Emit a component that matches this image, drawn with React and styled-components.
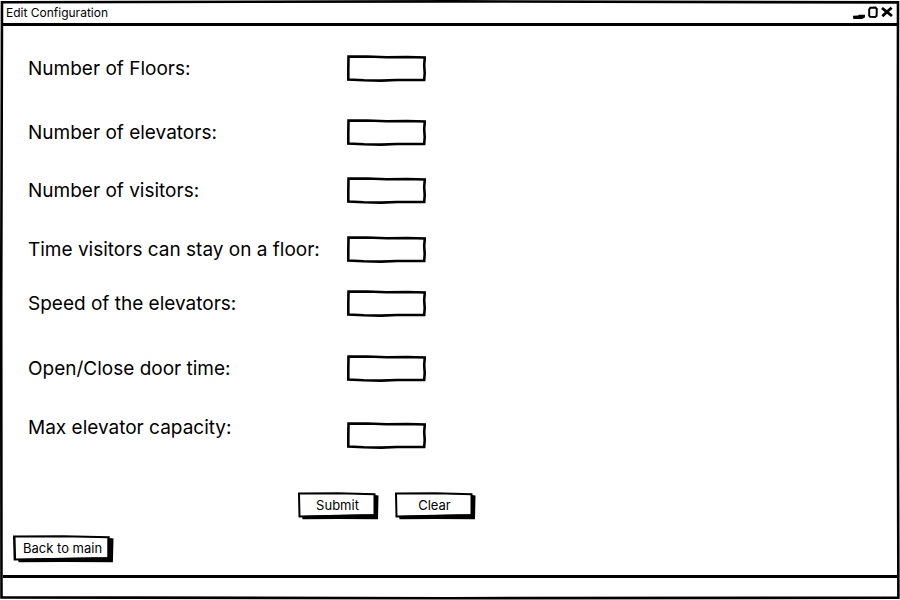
import React from "react";
import styled, { createGlobalStyle } from "styled-components";

const GlobalStyle = createGlobalStyle`
  *, *::before, *::after { box-sizing: border-box; }
  body { margin: 0; background: #fff; color: #000; font-family: Inter, "Open Sans", sans-serif; }
`;

const Window = styled.div`
  position: relative;
  display: flex;
  flex-direction: column;
  min-height: 100vh;
  padding: 3px;
`;

const Sketch = styled.svg`
  position: absolute;
  inset: 0;
  width: 100%;
  height: 100%;
  fill: none;
  stroke: #000;
  pointer-events: none;
`;

const TitleBar = styled.header`
  display: flex;
  align-items: center;
  justify-content: space-between;
  height: 23px;
  padding: 0 4px 1px 3px;
  border-bottom: 3px solid #000;
`;

const Title = styled.h1`
  margin: 0;
  font-size: 12px;
  line-height: 16px;
  font-weight: 400;
`;

const WindowControls = styled.div`
  display: flex;
  align-items: center;
  gap: 3px;
`;

const ControlButton = styled.button`
  display: flex;
  padding: 0;
  border: 0;
  background: none;
`;

const Content = styled.main`
  flex: 1;
  padding: 29px 10px 10px;
`;

const Form = styled.form`
  display: flex;
  flex-direction: column;
  padding-left: 15px;
`;

const Row = styled.div`
  display: grid;
  grid-template-columns: 319px 79px;
  align-items: end;
  height: ${(p) => (p.$staggered ? "35px" : "27px")};
  margin-bottom: ${(p) => p.$after}px;
`;

const Label = styled.label`
  align-self: start;
  font-size: 19px;
  line-height: 27px;
  white-space: nowrap;
`;

const InputFrame = styled.div`
  position: relative;
  height: 27px;
`;

const Input = styled.input`
  display: block;
  width: 100%;
  height: 100%;
  padding: 4px 8px;
  border: 0;
  outline: 0;
  background: transparent;
  font: inherit;
  font-size: 16px;
`;

const Actions = styled.div`
  display: flex;
  gap: 16px;
  padding-left: 270px;
`;

const Button = styled.button`
  position: relative;
  display: block;
  height: 28px;
  min-width: 81px;
  padding: 0 12px 3px 10px;
  border: 0;
  background: none;
  color: #000;
  font: inherit;
  font-size: 13px;
  line-height: 16px;
`;

const Footer = styled.footer`
  height: 22px;
  border-top: 3px solid #000;
`;

const BackBar = styled.nav`
  margin-top: 15px;
`;

const fields = [
  { id: "floors", label: "Number of Floors:", after: 37 },
  { id: "elevators", label: "Number of elevators:", after: 31 },
  { id: "visitors", label: "Number of visitors:", after: 32 },
  { id: "stay", label: "Time visitors can stay on a floor:", after: 27 },
  { id: "speed", label: "Speed of the elevators:", after: 38 },
  { id: "door", label: "Open/Close door time:", after: 32 },
  { id: "capacity", label: "Max elevator capacity:", after: 43, staggered: true },
];

function SketchInput({ id }) {
  return (
    <InputFrame>
      <Sketch viewBox="0 0 79 27" preserveAspectRatio="none" aria-hidden="true">
        <path strokeWidth="2.6" d="M1.5 1.6 L20 1.5 L40 2.2 L60 2 L77.8 2.4 L77.2 10 L77.7 18 L77.2 25 L50 25 L34 25.6 L17 25.3 L1.3 24.6 L1.3 14 Z" />
      </Sketch>
      <Input id={id} name={id} type="text" />
    </InputFrame>
  );
}

function SketchButton({ children, ...rest }) {
  return (
    <Button {...rest}>
      <Sketch viewBox="0 0 81 28" preserveAspectRatio="none" aria-hidden="true">
        <path strokeWidth="2" d="M1 1.5 L40 1.2 L76.5 2.2 L76.5 23 L52 23.4 L30 24 L1.5 24.5 Z" />
        <path stroke="none" fill="#000" d="M77 3 L80.5 3.5 L80 27.2 L40 27 L4.5 27.2 L4 24 L40 23 L76 22.5 Z" />
      </Sketch>
      {children}
    </Button>
  );
}

export default function App() {
  return (
    <>
      <GlobalStyle />
      <Window>
        <Sketch viewBox="0 0 900 600" preserveAspectRatio="none" aria-hidden="true">
          <path strokeWidth="2.6" d="M2 2.2 L450 1.4 L898 2.4 L897.6 300 L898.4 597.8 L450 598.2 L1.5 597.4 L1.2 300 Z" />
        </Sketch>
        <TitleBar>
          <Title>Edit Configuration</Title>
          <WindowControls>
            <ControlButton type="button" aria-label="Minimize">
              <svg width="12" height="14" viewBox="0 0 12 14" aria-hidden="true">
                <path d="M0 9.8 L5 9.6 L6 8.8 L12 8.8 L11.9 11.6 L9 13 L0.3 13 Z" />
              </svg>
            </ControlButton>
            <ControlButton type="button" aria-label="Maximize">
              <svg width="10" height="14" viewBox="0 0 10 14" fill="none" stroke="#000" strokeWidth="2" aria-hidden="true">
                <path d="M2.4 1.8 L7.4 1.6 L8.8 3 L8.6 9.8 L7.2 11 L2.2 10.8 L1.2 9.6 L1.2 3.4 Z" />
              </svg>
            </ControlButton>
            <ControlButton type="button" aria-label="Close">
              <svg width="12" height="14" viewBox="0 0 12 14" fill="none" stroke="#000" strokeWidth="2.8" aria-hidden="true">
                <path d="M1 2 L5.5 5.6 L11 10 M10.6 1.8 L6 5.8 L1.4 10.2" />
              </svg>
            </ControlButton>
          </WindowControls>
        </TitleBar>
        <Content>
          <Form>
            {fields.map((f) => (
              <Row key={f.id} $after={f.after} $staggered={f.staggered}>
                <Label htmlFor={f.id}>{f.label}</Label>
                <SketchInput id={f.id} />
              </Row>
            ))}
            <Actions>
              <SketchButton type="submit">Submit</SketchButton>
              <SketchButton type="reset">Clear</SketchButton>
            </Actions>
          </Form>
          <BackBar>
            <SketchButton type="button">Back to main</SketchButton>
          </BackBar>
        </Content>
        <Footer />
      </Window>
    </>
  );
}
